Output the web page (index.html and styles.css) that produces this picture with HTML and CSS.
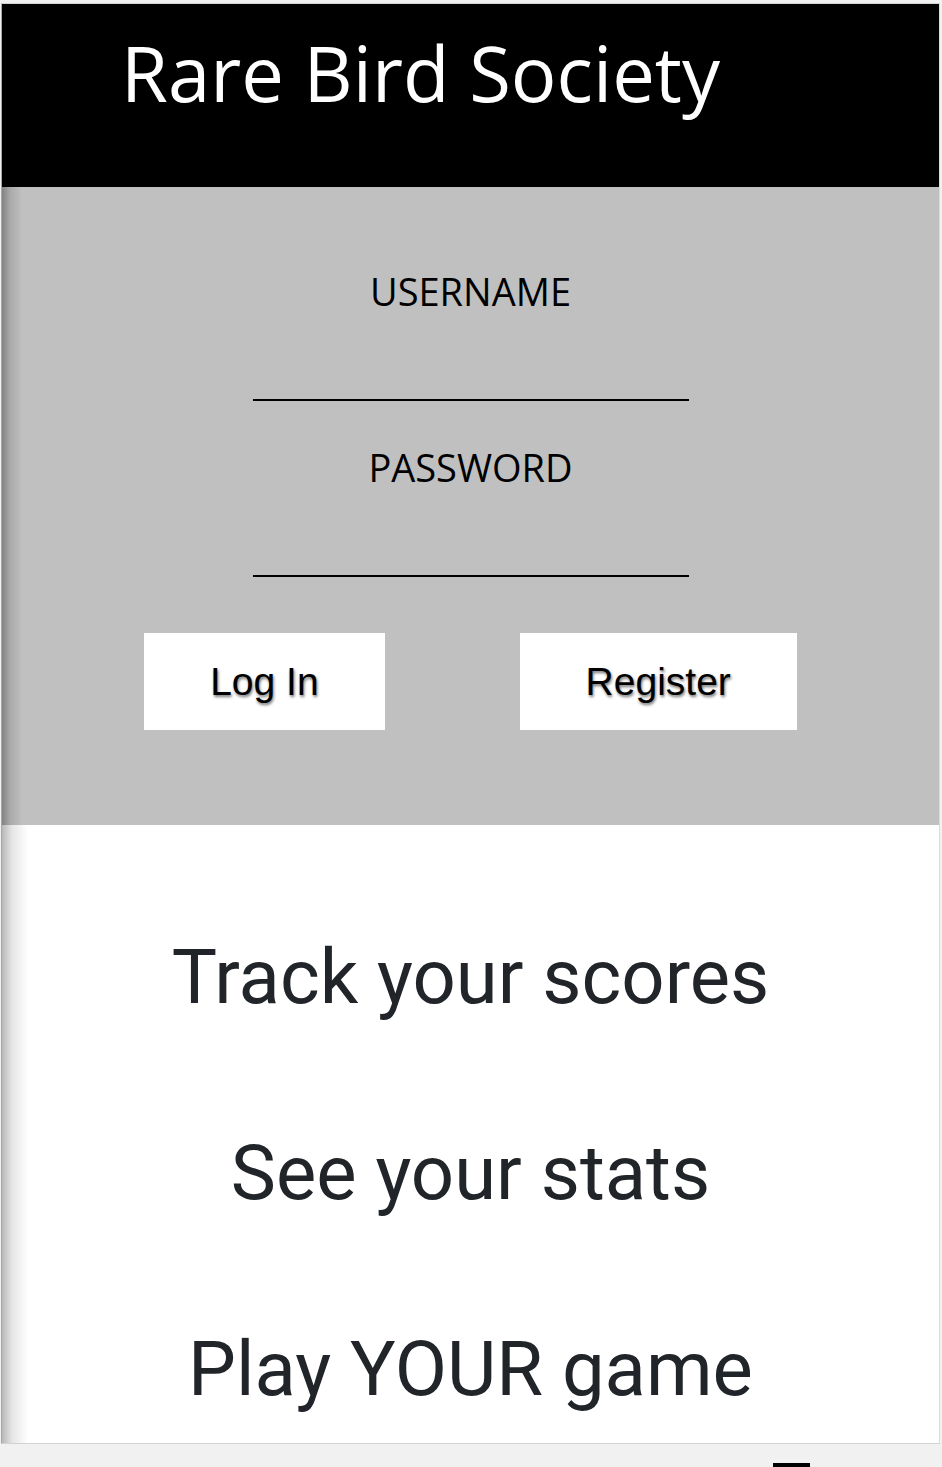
FILE: index.html
```html
<!DOCTYPE html>
<html lang="en">
<head>
<meta charset="utf-8">
<title>Rare Bird Society</title>
<link rel="stylesheet" href="styles.css">
</head>
<body>
<div class="frame">
  <header class="site-header">
    <h1 class="brand">Rare Bird Society</h1>
  </header>
  <section class="login">
    <form class="login-form">
      <label class="field-label" for="username">USERNAME</label>
      <input class="field-input" id="username" type="text">
      <label class="field-label" for="password">PASSWORD</label>
      <input class="field-input" id="password" type="password">
      <div class="actions">
        <button class="btn" type="button">Log In</button>
        <button class="btn" type="button">Register</button>
      </div>
    </form>
  </section>
  <section class="features">
    <p class="feature">Track your scores</p>
    <p class="feature">See your stats</p>
    <p class="feature">Play YOUR game</p>
  </section>
</div>
<div class="bottom-strip"><span class="bar"></span></div>
</body>
</html>
```

FILE: styles.css
```css
html, body {
  margin: 0;
  padding: 0;
}
body {
  background: #f1f1f1;
  width: 942px;
  overflow: hidden;
}
.frame {
  margin: 3px 0 0 1px;
  width: 937px;
  border-top: 1px solid #d2d2d2;
  border-left: 1px solid #a8a8a8;
  border-right: 1px solid #dcdcdc;
  border-bottom: 1px solid #d2d2d2;
  display: flex;
  flex-direction: column;
}
.site-header {
  background: #000;
  height: 183px;
  box-sizing: border-box;
  padding: 17px 0 0 119px;
}
.brand {
  margin: 0;
  font-family: "Open Sans", "Liberation Sans", sans-serif;
  font-weight: 400;
  font-size: 76px;
  line-height: normal;
  color: #fff;
}
.login {
  background: linear-gradient(to right, rgba(0,0,0,0.32) 0px, rgba(0,0,0,0.12) 8px, rgba(0,0,0,0) 20px), #c0c0c0;
  height: 638px;
  box-sizing: border-box;
  padding-top: 78px;
}
.login-form {
  display: flex;
  flex-direction: column;
  align-items: center;
  margin: 0;
}
.field-label {
  font-family: "Open Sans", "Liberation Sans", sans-serif;
  font-size: 38px;
  line-height: normal;
  color: #000;
}
.field-input {
  display: block;
  width: 436px;
  height: 42px;
  box-sizing: border-box;
  margin: 42px 0 40px;
  padding: 0;
  border: 0;
  border-bottom: 2px solid #000;
  background: transparent;
  outline: none;
  font-size: 30px;
}
.actions {
  display: flex;
  gap: 135px;
  margin-top: 16px;
}
.btn {
  height: 97px;
  padding: 0 66px;
  border: 0;
  background: #fff;
  font-family: "Liberation Sans", Arial, sans-serif;
  font-size: 39px;
  color: #000;
  text-shadow: 1px 2px 3px rgba(0,0,0,0.55);
  cursor: pointer;
}
.features {
  background: linear-gradient(to right, rgba(0,0,0,0.28) 0px, rgba(0,0,0,0.1) 10px, rgba(0,0,0,0) 26px), #fff;
  height: 618px;
  box-sizing: border-box;
  padding-top: 107px;
  display: flex;
  flex-direction: column;
  align-items: center;
  gap: 106px;
}
.feature {
  margin: 0;
  font-family: Roboto, "Liberation Sans", sans-serif;
  font-weight: 400;
  font-size: 76px;
  line-height: normal;
  color: #212529;
}
.bottom-strip {
  height: 23px;
}
.bar {
  display: block;
  width: 37px;
  height: 4px;
  background: #000;
  margin: 19px 0 0 773px;
}
```
